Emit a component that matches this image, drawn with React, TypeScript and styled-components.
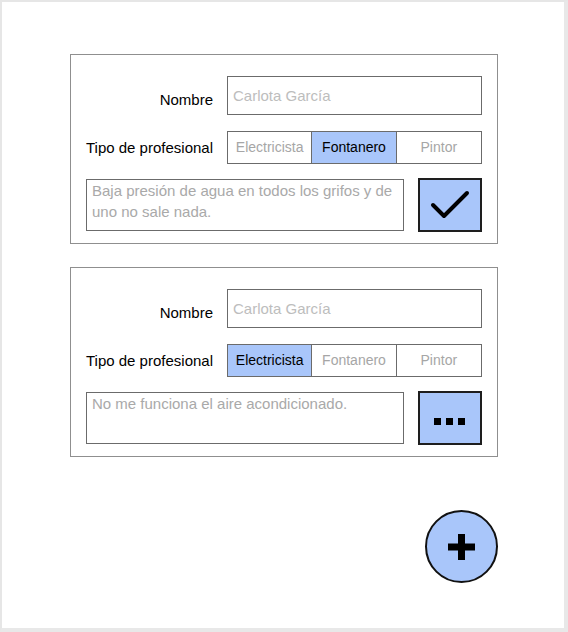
import React from "react";
import styled, { createGlobalStyle } from "styled-components";

const Global = createGlobalStyle`
  html, body { margin: 0; padding: 0; background: #ffffff; }
  body { font-family: "Liberation Sans", Arial, sans-serif; }
  * { box-sizing: border-box; }
`;

const Frame = styled.div`
  width: 568px;
  height: 632px;
  border-top: 2px solid #e6e6e6;
  border-left: 2px solid #e6e6e6;
  border-right: 4px solid #e8e8e8;
  border-bottom: 4px solid #e8e8e8;
  background: #ffffff;
  padding: 52px 66px 0 68px;
  display: flex;
  flex-direction: column;
  gap: 23px;
`;

const Card = styled.div`
  width: 428px;
  border: 1px solid #8f8f8f;
  padding: 21px 15px 11px 15px;
  display: grid;
  grid-template-columns: 127px 255px;
  column-gap: 14px;
  row-gap: 0;
`;

const Label = styled.div<{ $offset?: number }>`
  font-size: 15px;
  color: #000;
  white-space: nowrap;
  display: flex;
  align-items: center;
  justify-content: flex-end;
  padding-top: ${(p) => p.$offset ?? 0}px;
`;

const Input = styled.div`
  height: 39px;
  border: 1px solid #6b6b6b;
  font-size: 15px;
  color: #bdbdbd;
  display: flex;
  align-items: center;
  padding-left: 5px;
`;

const Gap = styled.div<{ $h: number }>`
  grid-column: 1 / span 2;
  height: ${(p) => p.$h}px;
`;

const Segments = styled.div`
  height: 33px;
  display: grid;
  grid-template-columns: 1fr 1fr 1fr;
  border: 1px solid #6b6b6b;
`;

const Segment = styled.div<{ $active?: boolean; $last?: boolean }>`
  display: flex;
  align-items: center;
  justify-content: center;
  font-size: 14px;
  color: ${(p) => (p.$active ? "#000" : "#a6a6a6")};
  background: ${(p) => (p.$active ? "#a9c6fa" : "#fff")};
  border-right: ${(p) => (p.$last ? "none" : "1px solid #6b6b6b")};
  padding-bottom: 1px;
`;

const BottomRow = styled.div`
  grid-column: 1 / span 2;
  display: flex;
  gap: 14px;
  align-items: flex-start;
`;

const TextArea = styled.div`
  flex: 0 0 318px;
  height: 52px;
  margin-top: 1px;
  border: 1px solid #6b6b6b;
  font-size: 15px;
  line-height: 21px;
  color: #a9a9a9;
  padding: 0 5px;
`;

const ActionButton = styled.div<{ $shift?: number }>`
  width: 64px;
  height: 54px;
  background: #a9c6fa;
  border: 2px solid #1e1e1e;
  display: flex;
  align-items: center;
  justify-content: center;
  padding-top: ${(p) => p.$shift ?? 0}px;
`;

const FabRow = styled.div`
  display: flex;
  justify-content: flex-end;
  padding-top: 30px;
`;

const Fab = styled.div`
  width: 73px;
  height: 73px;
  border-radius: 50%;
  background: #a9c6fa;
  border: 2px solid #111;
  display: flex;
  align-items: center;
  justify-content: center;
`;

const Check = () => (
  <svg width="40" height="32" viewBox="0 0 40 32">
    <path d="M3 16 L14 27 L37 4" fill="none" stroke="#000" strokeWidth="4" strokeLinecap="round" strokeLinejoin="round" />
  </svg>
);

const Dots = () => (
  <svg width="32" height="12" viewBox="0 0 32 12">
    <rect x="0" y="3" width="7" height="7" fill="#000" />
    <rect x="12" y="3" width="7" height="7" fill="#000" />
    <rect x="24" y="3" width="7" height="7" fill="#000" />
  </svg>
);

const Plus = () => (
  <svg width="27" height="26" viewBox="0 0 27 26">
    <rect x="10" y="0" width="7" height="26" fill="#000" />
    <rect x="0" y="9.5" width="27" height="7" fill="#000" />
  </svg>
);

type Req = {
  name: string;
  type: string;
  desc: string;
  done: boolean;
};

const requests: Req[] = [
  { name: "Carlota García", type: "Fontanero", desc: "Baja presión de agua en todos los grifos y de uno no sale nada.", done: true },
  { name: "Carlota García", type: "Electricista", desc: "No me funciona el aire acondicionado.", done: false },
];

const types = ["Electricista", "Fontanero", "Pintor"];

export default function App() {
  return (
    <>
      <Global />
      <Frame>
        {requests.map((r, i) => (
          <Card key={i}>
            <Label $offset={7}>Nombre</Label>
            <Input>{r.name}</Input>
            <Gap $h={16} />
            <Label>Tipo de profesional</Label>
            <Segments>
              {types.map((t, j) => (
                <Segment key={t} $active={t === r.type} $last={j === types.length - 1}>
                  {t}
                </Segment>
              ))}
            </Segments>
            <Gap $h={14} />
            <BottomRow>
              <TextArea>{r.desc}</TextArea>
              <ActionButton $shift={r.done ? 0 : 5}>{r.done ? <Check /> : <Dots />}</ActionButton>
            </BottomRow>
          </Card>
        ))}
        <FabRow>
          <Fab>
            <Plus />
          </Fab>
        </FabRow>
      </Frame>
    </>
  );
}
